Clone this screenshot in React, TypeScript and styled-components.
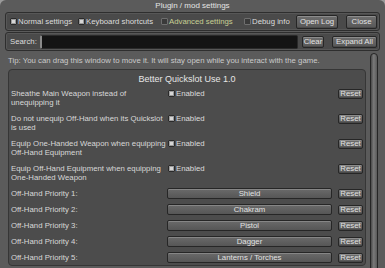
import React from "react";
import styled, { createGlobalStyle } from "styled-components";

const Global = createGlobalStyle`
  html, body { margin: 0; padding: 0; background: #9a9a9a; }
  body { font-family: "Liberation Sans", Arial, sans-serif; font-size: 7.8px; }
  * { box-sizing: border-box; }
`;

const Window = styled.div`
  width: 385px;
  height: 268px;
  background: #5b5b5b;
  border-radius: 6px 6px 0 0;
  overflow: hidden;
  display: flex;
  flex-direction: column;
  color: #dcdcdc;
`;

const Title = styled.div`
  height: 12px;
  line-height: 12px;
  text-align: center;
  color: #e4e4e4;
  font-size: 8px;
`;

const Bar = styled.div<{ $h: number; $mt: number }>`
  margin: ${(p) => p.$mt}px 5px 0 5px;
  height: ${(p) => p.$h}px;
  background: #4a4a4a;
  border: 1px solid #2e2e2e;
  border-radius: 3px;
  box-shadow: inset 0 0 0 1px #575757;
  display: flex;
  align-items: center;
  padding: 0 2px 0 4px;
`;

const Check = styled.label<{ $w?: number; $accent?: boolean }>`
  display: flex;
  align-items: center;
  width: ${(p) => (p.$w ? `${p.$w}px` : "auto")};
  flex: none;
  color: ${(p) => (p.$accent ? "#c6cf93" : "#dcdcdc")};
  white-space: nowrap;
  line-height: 9px;
`;

const Box = styled.span<{ $on: boolean }>`
  width: 7px;
  height: 7px;
  margin-right: 1px;
  border-radius: 1px;
  border: 1px solid ${(p) => (p.$on ? "#2a2a2a" : "#6e6e6e")};
  background: ${(p) => (p.$on ? "#d6d6d6" : "#3a3a3a")};
  box-shadow: ${(p) => (p.$on ? "inset 0 0 0 1px #9a9a9a" : "none")};
`;

const Button = styled.button<{ $w: number; $h: number; $ml?: number }>`
  width: ${(p) => p.$w}px;
  height: ${(p) => p.$h}px;
  margin-left: ${(p) => p.$ml ?? 0}px;
  padding: 0;
  font-family: inherit;
  font-size: 7.8px;
  color: #e2e2e2;
  background: linear-gradient(#6e6e6e, #575757);
  border: 1px solid #262626;
  border-radius: 2px;
  box-shadow: inset 0 1px 0 #8c8c8c, inset 0 -1px 0 #4a4a4a;
  line-height: 1;
  flex: none;
`;

const Spacer = styled.div`
  flex: 1;
`;

const SearchLabel = styled.span`
  width: 30px;
  flex: none;
  color: #dcdcdc;
`;

const SearchInput = styled.div`
  width: 258px;
  height: 14px;
  background: #141414;
  border: 1px solid #2a2a2a;
  border-left: 2px solid #8a8a8a;
  border-radius: 2px;
`;

const Body = styled.div`
  flex: 1;
  display: flex;
  margin-top: 2px;
  min-height: 0;
`;

const Content = styled.div`
  width: 358px;
  margin-left: 8px;
  display: flex;
  flex-direction: column;
`;

const Tip = styled.div`
  margin-top: 2px;
  height: 14px;
  line-height: 12px;
  color: #cacaca;
  white-space: nowrap;
`;

const Scroll = styled.div`
  width: 14px;
  display: flex;
  justify-content: center;
  padding-left: 2px;
`;

const Thumb = styled.div`
  width: 8px;
  height: 240px;
  border: 1px solid #262626;
  border-radius: 4px;
  background: linear-gradient(90deg, #4a4a4a, #7a7a7a 45%, #5a5a5a);
`;

const Panel = styled.div`
  height: 197px;
  background: #4c4c4c;
  border: 1px solid #363636;
  border-radius: 4px;
  padding: 4px 2px 0 2px;
`;

const PanelTitle = styled.div`
  height: 15px;
  line-height: 11px;
  text-align: center;
  font-size: 9px;
  color: #e6e6e6;
`;

const Row = styled.div<{ $h: number }>`
  display: grid;
  grid-template-columns: 156px 165px 1fr;
  height: ${(p) => p.$h}px;
  align-items: start;
`;

const Label = styled.div`
  line-height: 9px;
  color: #d8d8d8;
`;

const ValueCell = styled.div`
  padding-left: 1px;
`;

const Select = styled.div`
  height: 11px;
  margin-top: -1px;
  line-height: 9px;
  text-align: center;
  color: #e2e2e2;
  background: linear-gradient(#6a6a6a, #565656);
  border: 1px solid #262626;
  border-radius: 2px;
  box-shadow: inset 0 1px 0 #868686;
`;

const ResetCell = styled.div`
  display: flex;
  justify-content: flex-end;
`;

const boolRows = [
  "Sheathe Main Weapon instead of unequipping it",
  "Do not unequip Off-Hand when its Quickslot is used",
  "Equip One-Handed Weapon when equipping Off-Hand Equipment",
  "Equip Off-Hand Equipment when equipping One-Handed Weapon",
];

const priorities = ["Shield", "Chakram", "Pistol", "Dagger", "Lanterns / Torches"];

export default function App() {
  return (
    <>
      <Global />
      <Window>
        <Title>Plugin / mod settings</Title>
        <Bar $h={19} $mt={0}>
          <Check $w={68}>
            <Box $on />
            Normal settings
          </Check>
          <Check $w={83}>
            <Box $on />
            Keyboard shortcuts
          </Check>
          <Check $w={83} $accent>
            <Box $on={false} />
            Advanced settings
          </Check>
          <Check>
            <Box $on={false} />
            Debug info
          </Check>
          <Spacer />
          <Button $w={42} $h={14}>Open Log</Button>
          <Button $w={31} $h={14} $ml={8}>Close</Button>
        </Bar>
        <Bar $h={19} $mt={1}>
          <SearchLabel>Search:</SearchLabel>
          <SearchInput />
          <Spacer />
          <Button $w={22} $h={12}>Clear</Button>
          <Button $w={45} $h={12} $ml={8}>Expand All</Button>
        </Bar>
        <Body>
          <Content>
            <Tip>Tip: You can drag this window to move it. It will stay open while you interact with the game.</Tip>
            <Panel>
              <PanelTitle>Better Quickslot Use 1.0</PanelTitle>
              {boolRows.map((t) => (
                <Row key={t} $h={25}>
                  <Label>{t}</Label>
                  <ValueCell>
                    <Check>
                      <Box $on />
                      Enabled
                    </Check>
                  </ValueCell>
                  <ResetCell>
                    <Button $w={25} $h={10}>Reset</Button>
                  </ResetCell>
                </Row>
              ))}
              {priorities.map((p, i) => (
                <Row key={p} $h={16}>
                  <Label>Off-Hand Priority {i + 1}:</Label>
                  <Select>{p}</Select>
                  <ResetCell>
                    <Button $w={25} $h={10}>Reset</Button>
                  </ResetCell>
                </Row>
              ))}
            </Panel>
          </Content>
          <Scroll>
            <Thumb />
          </Scroll>
        </Body>
      </Window>
    </>
  );
}
